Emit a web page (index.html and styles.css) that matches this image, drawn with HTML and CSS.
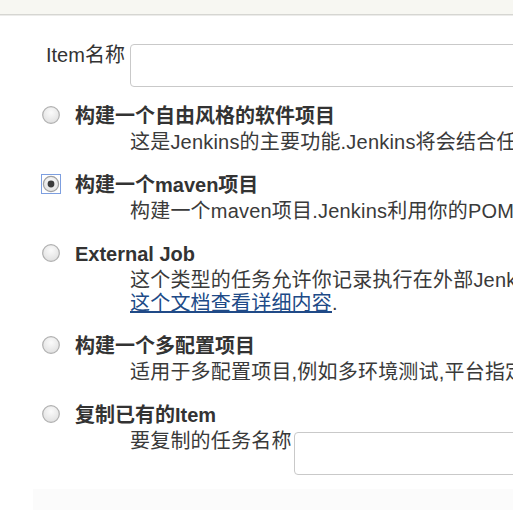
FILE: index.html
```html
<!DOCTYPE html>
<html lang="zh">
<head>
<meta charset="utf-8">
<link rel="stylesheet" href="styles.css">
</head>
<body>
<div class="topbar"></div>
<div class="content">
  <div class="name-row">
    <span class="name-label">Item名称</span>
    <div class="text-input"></div>
  </div>
  <div class="options">
    <div class="option">
      <div class="opt-head">
        <svg class="radio" width="20" height="20" viewBox="0 0 20 20"><defs><radialGradient id="g1" cx="50%" cy="35%" r="65%"><stop offset="0" stop-color="#fbfbfb"/><stop offset="1" stop-color="#e0e0e0"/></radialGradient></defs><circle cx="10" cy="10" r="8.3" fill="url(#g1)" stroke="#b0b0b0" stroke-width="1.2"/></svg>
        <span class="title">构建一个自由风格的软件项目</span>
      </div>
      <div class="desc">这是Jenkins的主要功能.Jenkins将会结合任何SCM和任何构建系统来构建你的项目, 甚至可以构建软件以外的系统.</div>
    </div>
    <div class="option">
      <div class="opt-head">
        <svg class="radio" width="20" height="20" viewBox="0 0 20 20"><defs><radialGradient id="g2" cx="50%" cy="35%" r="65%"><stop offset="0" stop-color="#fbfbfb"/><stop offset="1" stop-color="#e0e0e0"/></radialGradient></defs><rect x="0.5" y="0.5" width="19" height="19" fill="none" stroke="#7d9fe0" stroke-width="1"/><circle cx="10" cy="10" r="7.6" fill="url(#g2)" stroke="#a0a0a0" stroke-width="1.2"/><circle cx="10" cy="10" r="3.4" fill="#3c3c3c"/></svg>
        <span class="title">构建一个maven项目</span>
      </div>
      <div class="desc">构建一个maven项目.Jenkins利用你的POM文件,这样可以大大减轻构建配置.</div>
    </div>
    <div class="option">
      <div class="opt-head">
        <svg class="radio" width="20" height="20" viewBox="0 0 20 20"><defs><radialGradient id="g3" cx="50%" cy="35%" r="65%"><stop offset="0" stop-color="#fbfbfb"/><stop offset="1" stop-color="#e0e0e0"/></radialGradient></defs><circle cx="10" cy="10" r="8.3" fill="url(#g3)" stroke="#b0b0b0" stroke-width="1.2"/></svg>
        <span class="title">External Job</span>
      </div>
      <div class="desc">这个类型的任务允许你记录执行在外部Jenkins的任务, 任务甚至运行在远程机器上.这可以让Jenkins作为你所有自动系统的控制面板.参阅</div>
      <div class="desc"><a class="doc-link" href="#">这个文档查看详细内容</a>.</div>
    </div>
    <div class="option">
      <div class="opt-head">
        <svg class="radio" width="20" height="20" viewBox="0 0 20 20"><defs><radialGradient id="g4" cx="50%" cy="35%" r="65%"><stop offset="0" stop-color="#fbfbfb"/><stop offset="1" stop-color="#e0e0e0"/></radialGradient></defs><circle cx="10" cy="10" r="8.3" fill="url(#g4)" stroke="#b0b0b0" stroke-width="1.2"/></svg>
        <span class="title">构建一个多配置项目</span>
      </div>
      <div class="desc">适用于多配置项目,例如多环境测试,平台指定构建,等等.</div>
    </div>
    <div class="option">
      <div class="opt-head">
        <svg class="radio" width="20" height="20" viewBox="0 0 20 20"><defs><radialGradient id="g5" cx="50%" cy="35%" r="65%"><stop offset="0" stop-color="#fbfbfb"/><stop offset="1" stop-color="#e0e0e0"/></radialGradient></defs><circle cx="10" cy="10" r="8.3" fill="url(#g5)" stroke="#b0b0b0" stroke-width="1.2"/></svg>
        <span class="title">复制已有的Item</span>
      </div>
      <div class="desc copy-row">
        <span class="copy-label">要复制的任务名称</span>
        <div class="text-input copy-input"></div>
      </div>
    </div>
  </div>
  <div class="footer"></div>
</div>
</body>
</html>
```

FILE: styles.css
```css
html, body {
  margin: 0;
  padding: 0;
  overflow: hidden;
  background: #ffffff;
}

body {
  font-family: "Liberation Sans", "Noto Sans CJK SC", sans-serif;
  font-size: 20px;
  color: #333333;
  width: 513px;
  height: 510px;
}

.topbar {
  height: 14px;
  background: #f7f7f2;
  border-bottom: 1px solid #d6d6d2;
  box-shadow: 0 1px 0 #ececea;
}

.content {
  display: flex;
  flex-direction: column;
}

.name-row {
  display: flex;
  align-items: flex-start;
  margin-top: 29px;
  padding-left: 46px;
  gap: 5px;
}

.name-label {
  line-height: 22px;
  white-space: nowrap;
}

.text-input {
  width: 420px;
  height: 41px;
  border: 1px solid #c9c9c9;
  border-radius: 4px;
  background: #fff;
  flex-shrink: 0;
}

.options {
  display: flex;
  flex-direction: column;
  margin-top: 15px;
}

.option {
  display: flex;
  flex-direction: column;
  margin-bottom: 17px;
}

.opt-head {
  display: flex;
  align-items: flex-start;
  padding-left: 41px;
  gap: 14px;
}

.radio {
  margin-top: 3px;
  flex-shrink: 0;
}

.title {
  font-weight: bold;
  line-height: 29px;
  white-space: nowrap;
}

.desc {
  padding-left: 130px;
  line-height: 23px;
  white-space: nowrap;
  color: #3a3a3a;
  letter-spacing: 0.2px;
}

.doc-link {
  color: #204a87;
  text-decoration: underline;
}

.copy-row {
  display: flex;
  align-items: flex-start;
  gap: 2px;
}

.copy-label {
  line-height: 23px;
}

.copy-input {
  margin-top: 2px;
  width: 300px;
}

.footer {
  margin-left: 33px;
  margin-top: -3px;
  height: 40px;
  background: #fbfbfb;
}
```
